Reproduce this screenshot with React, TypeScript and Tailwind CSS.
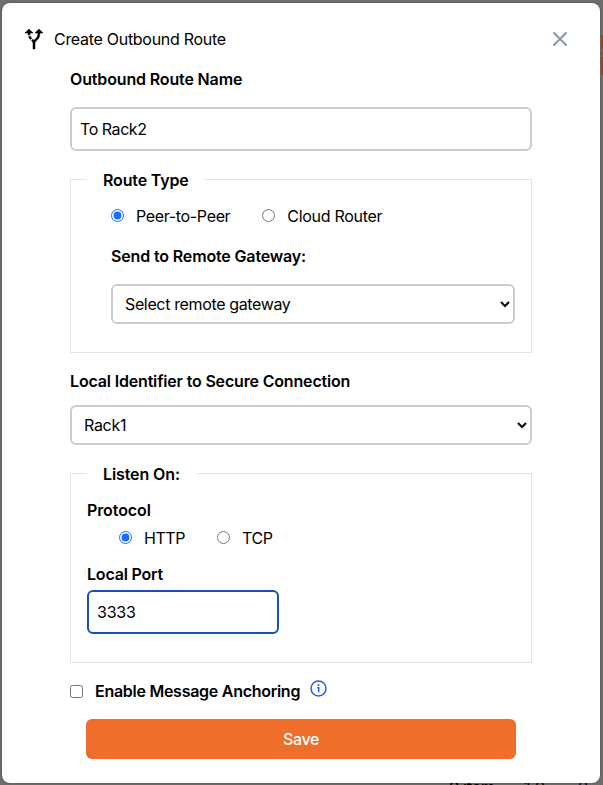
import React from "react";
import { MdAltRoute } from "react-icons/md";

function Radio({ name, label, checked, text }: { name: string; label: string; checked?: boolean; text: string }) {
  return (
    <label className="flex h-6 items-center">
      <input type="radio" name={name} defaultChecked={checked} className="mb-px h-[13px] w-[13px] accent-[#1a6dff]" />
      <span className={"ml-3 whitespace-nowrap " + text}>{label}</span>
    </label>
  );
}

export default function App() {
  return (
    <div className="relative h-[785px] w-[603px] overflow-hidden bg-[#6e6e6e] pl-[2px] pt-[3px] font-['Inter',sans-serif] text-base leading-6 text-black">
      <div className="absolute left-[601px] top-[35px] h-[40px] w-[2px] bg-[#a04411]" />
      <div className="absolute left-[601px] top-[49px] h-[3px] w-[2px] bg-[#77665c]" />
      <div className="absolute left-[601px] top-[55px] h-[2px] w-[2px] bg-[#77665c]" />
      <div className="absolute left-[449px] top-[777px] text-base font-medium leading-5 tracking-[-0.3px] whitespace-nowrap">0 item</div>
      <div className="absolute left-[524px] top-[777px] text-base leading-5 whitespace-nowrap">1 0</div>
      <div className="absolute left-[578px] top-[777px] text-base leading-5">0</div>

      <div className="relative flex h-[780px] w-[598px] flex-col rounded-lg bg-white shadow-[0_0_2px_rgba(0,0,0,0.4)]">
        <header className="mt-6 flex h-6 shrink-0 items-center pl-5 pr-[33px]">
          <MdAltRoute className="h-6 w-6 [&>path:last-child]:[stroke-width:0.5px]" />
          <h1 className="ml-2 grow tracking-[-0.29px]">Create Outbound Route</h1>
          <svg className="h-[14px] w-[14px]" viewBox="0 0 14 14" fill="none" stroke="#8892a9" strokeWidth="1.8" strokeLinecap="round">
            <path d="M1 1 13 13M13 1 1 13" />
          </svg>
        </header>

        <form className="flex flex-col px-[68px] pt-4">
          <label className="font-semibold tracking-[-0.15px]">Outbound Route Name</label>
          <input defaultValue="To Rack2" className="mt-4 h-11 w-full rounded-md border-2 border-[#c9cdd3] px-2 tracking-[-0.45px] outline-none" />

          <fieldset className="mt-[17px] h-[185px] border border-[#e2e4e8] px-4">
            <legend className="h-[22px] px-4 font-semibold tracking-[-0.15px]">Route Type</legend>
            <div className="ml-6 mt-[14px] flex gap-8">
              <Radio name="type" label="Peer-to-Peer" checked text="tracking-[-0.34px]" />
              <Radio name="type" label="Cloud Router" text="tracking-[-0.3px]" />
            </div>
            <div className="ml-6 mt-4 font-semibold tracking-[-0.15px]">Send to Remote Gateway:</div>
            <select className="ml-6 mt-4 block h-10 w-[404px] rounded-md border-2 border-[#c9cdd3] bg-white px-2 tracking-[-0.36px]">
              <option>Select remote gateway</option>
            </select>
          </fieldset>

          <label className="mt-4 font-semibold tracking-[-0.17px]">Local Identifier to Secure Connection</label>
          <select className="mt-3 block h-10 w-full rounded-md border-2 border-[#c9cdd3] bg-white px-2 tracking-[-0.3px]">
            <option>Rack1</option>
          </select>

          <fieldset className="mt-[17px] h-[201px] border border-[#e2e4e8] px-4">
            <legend className="h-[22px] px-4 font-semibold tracking-[-0.1px]">Listen On:</legend>
            <div className="mt-[14px] font-semibold tracking-[-0.1px]">Protocol</div>
            <div className="ml-8 mt-1 flex gap-8">
              <Radio name="protocol" label="HTTP" checked text="tracking-[-0.45px]" />
              <Radio name="protocol" label="TCP" text="tracking-[-0.4px]" />
            </div>
            <div className="mt-3 font-semibold tracking-[-0.2px]">Local Port</div>
            <input defaultValue="3333" className="mt-1 block h-11 w-48 rounded-md border-2 border-[#174fb8] px-2 tracking-[-0.2px] outline-none" />
          </fieldset>

          <div className="mt-4 flex h-6 items-center">
            <input type="checkbox" className="h-[13px] w-[13px]" />
            <span className="ml-3 whitespace-nowrap font-semibold tracking-[-0.27px]">Enable Message Anchoring</span>
            <svg className="mb-[5px] ml-[10px] h-[17px] w-[17px] shrink-0" viewBox="0 0 17 17" fill="none" stroke="#2f5bea" strokeWidth="1.5">
              <circle cx="8.5" cy="8.5" r="7.5" />
              <path d="M7.2 7.7h1.5v4.6" />
              <circle cx="8.5" cy="5.1" r="1" fill="#2f5bea" stroke="none" />
            </svg>
          </div>
          <button type="button" className="mx-4 mt-4 h-10 rounded-md bg-[#ee6e2b] font-medium tracking-[-0.4px] text-white">Save</button>
        </form>
      </div>
    </div>
  );
}
